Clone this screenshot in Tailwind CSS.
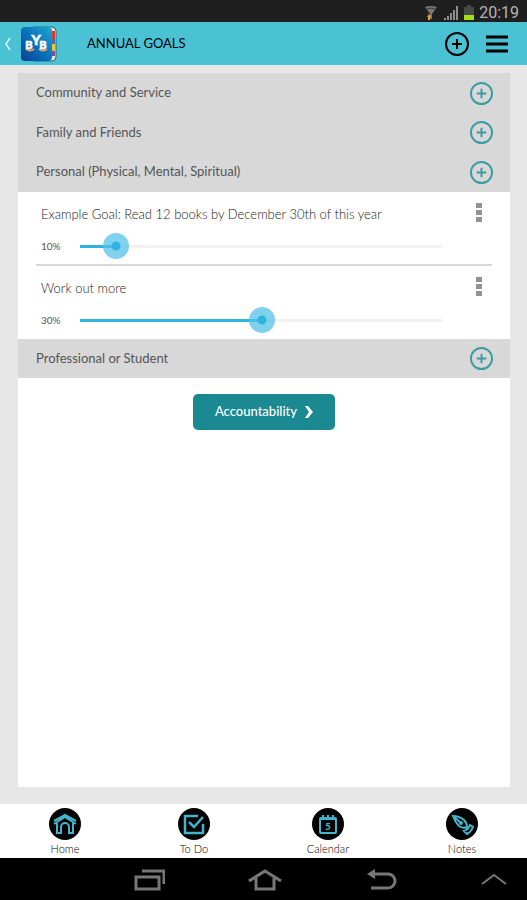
<!DOCTYPE html>
<html lang="en">

<head>
  <meta charset="UTF-8" />
  <meta name="viewport" content="width=device-width, initial-scale=1.0" />
  <title>Annual Goals</title>
  <script src="https://cdn.jsdelivr.net/npm/@tailwindcss/browser@4"></script>

  <style>
    body {
      font-family: Lato, 'Open Sans', sans-serif;
    }

    /* Goal progress slider */
    .progress {
      appearance: none;
      height: 26px;
      background: linear-gradient(to right, #2db5df var(--value), #f2f2f2 var(--value)) center / calc(100% - 26px) 3px no-repeat;
    }

    .progress::-webkit-slider-thumb {
      appearance: none;
      width: 26px;
      height: 26px;
      border-radius: 50%;
      background: radial-gradient(circle, #2db5df 4px, rgb(86 194 232 / 0.75) 5px);
    }
  </style>
</head>

<body class="min-h-screen flex flex-col bg-[#e7e7e7] text-[#555]">

  <!-- Status bar -->
  <div class="h-[22px] bg-[#1f1f1f] flex items-center justify-end gap-1 pt-1 pr-2 text-[#b5b5b5]">
    <svg class="w-4 h-4" viewBox="0 0 16 16" fill="none">
      <path d="M2 2Q8 0 14 2L9 9V14H7V9Z" fill="#777" />
      <path d="M4 4Q8 2 12 4" stroke="#333" />
      <path d="M6 9L8 12H7V15H5V12H4Z" fill="#f0a030" />
    </svg>
    <svg class="w-4 h-4" viewBox="0 0 16 16" fill="#8d8d8d">
      <path d="M1 13h2v2H1zM4 11h2v4H4zM7 8h2v7H7zM10 5h2v10h-2zM13 1h2v14h-2z" />
    </svg>
    <svg class="w-3 h-4" viewBox="0 0 12 16">
      <path d="M4 0h4v2h3v8H1V2h3z" fill="#484848" />
      <path d="M1 10h10v5H1z" fill="#a4dc1c" />
    </svg>
    <span class="text-base leading-5 font-[Roboto]">20:19</span>
  </div>

  <!-- Header -->
  <header class="h-[43px] bg-[#4bc1d4] flex items-center pl-1 pr-[18px] text-black">
    <a href="#" aria-label="Back" class="flex items-center gap-2">
      <svg class="w-2 h-4" viewBox="0 0 8 16" fill="none" stroke="#d9f3f7" stroke-width="1.5">
        <path d="M6 2L2 8l4 6" />
      </svg>
      <svg class="w-[38px] h-[38px]" viewBox="0 0 38 38">
        <defs>
          <linearGradient id="cover" x1="0" y1="1" x2="1" y2="0">
            <stop offset="0" stop-color="#0b3f94" />
            <stop offset="0.5" stop-color="#0873bd" />
            <stop offset="1" stop-color="#20a6d0" />
          </linearGradient>
        </defs>
        <rect x="10" y="2" width="26" height="34" rx="4" fill="#e9e2cf" stroke="#286b78" />
        <path d="M31 6h4v8h-4z" fill="#d93a2b" />
        <path d="M31 14h4v5h-4z" fill="#3f6fb5" />
        <path d="M31 19h4v7h-4z" fill="#efc52c" />
        <path d="M31 26h4v5h-4z" fill="#7a4fa3" />
        <rect x="1" y="2" width="31" height="34" rx="4" fill="url(#cover)" />
        <path d="M6 24q4 3 8 0M19 24q4 3 8 0" stroke="#e0a458" stroke-width="2" fill="none" />
        <g font-family="Lato" font-weight="900" fill="#fff" stroke="#fff" stroke-width="0.6" text-anchor="middle">
          <text x="9" y="24" font-size="11">B</text>
          <text x="16" y="20" font-size="14">Y</text>
          <text x="23" y="24" font-size="11">B</text>
        </g>
      </svg>
    </a>
    <h1 class="ml-7 pl-px flex-1 text-[13px]">ANNUAL GOALS</h1>
    <button aria-label="Add goal">
      <svg class="w-6 h-6" viewBox="0 0 24 24" fill="none" stroke="currentColor" stroke-width="2">
        <circle cx="12" cy="12" r="11" />
        <path d="M12 7v10M7 12h10" />
      </svg>
    </button>
    <button aria-label="Menu" class="ml-4">
      <svg class="w-6 h-6" viewBox="0 0 24 24" stroke="currentColor" stroke-width="3">
        <path d="M1 5h22M1 12h22M1 19h22" />
      </svg>
    </button>
  </header>

  <!-- Goals -->
  <main class="flex-1 ml-[18px] mt-2 mb-[17px] mr-[17px] bg-white text-[13px]">
    <section class="h-10 bg-[#d8d8d8] flex items-center justify-between pl-[18px] pr-[17px]">
      <h2>Community and Service</h2>
      <button aria-label="Add to Community and Service" class="text-[#3a9ca3]">
        <svg class="w-[23px] h-[23px]" viewBox="0 0 24 24" fill="none" stroke="currentColor" stroke-width="2">
          <circle cx="12" cy="12" r="11" />
          <path d="M12 7v10M7 12h10" />
        </svg>
      </button>
    </section>
    <section class="h-[39px] bg-[#d8d8d8] flex items-center justify-between pl-[18px] pr-[17px]">
      <h2>Family and Friends</h2>
      <button aria-label="Add to Family and Friends" class="text-[#3a9ca3]">
        <svg class="w-[23px] h-[23px]" viewBox="0 0 24 24" fill="none" stroke="currentColor" stroke-width="2">
          <circle cx="12" cy="12" r="11" />
          <path d="M12 7v10M7 12h10" />
        </svg>
      </button>
    </section>
    <section>
      <div class="h-10 bg-[#d8d8d8] flex items-center justify-between pl-[18px] pr-[17px]">
        <h2>Personal (Physical, Mental, Spiritual)</h2>
        <button aria-label="Add to Personal" class="text-[#3a9ca3]">
          <svg class="w-[23px] h-[23px]" viewBox="0 0 24 24" fill="none" stroke="currentColor" stroke-width="2">
            <circle cx="12" cy="12" r="11" />
            <path d="M12 7v10M7 12h10" />
          </svg>
        </button>
      </div>
      <ul class="px-[18px]">
        <li class="h-[74px] pt-2 pl-1 border-b-2 border-[#d8d8d8]">
          <div class="flex items-start justify-between pr-[9px]">
            <label for="goal-books" class="leading-7 pl-px font-light text-[#222]">Example Goal: Read 12 books by December 30th of this year</label>
            <button aria-label="Goal options">
              <svg class="w-2 h-6" viewBox="0 0 8 24" fill="#929292">
                <path d="M1 3h6v5H1zM1 10h6v5H1zM1 17h6v5H1z" />
              </svg>
            </button>
          </div>
          <div class="mt-[5px] flex items-center">
            <span class="w-[27px] pl-px text-[10px]">10%</span>
            <input id="goal-books" type="range" value="10" class="progress flex-1 mr-9" style="--value: 10%" />
          </div>
        </li>
        <li class="h-[73px] pt-2 pl-1">
          <div class="flex items-start justify-between pr-[9px]">
            <label for="goal-workout" class="leading-7 pl-px font-light text-[#222]">Work out more</label>
            <button aria-label="Goal options">
              <svg class="w-2 h-6" viewBox="0 0 8 24" fill="#929292">
                <path d="M1 3h6v5H1zM1 10h6v5H1zM1 17h6v5H1z" />
              </svg>
            </button>
          </div>
          <div class="mt-[5px] flex items-center">
            <span class="w-[27px] pl-px text-[10px]">30%</span>
            <input id="goal-workout" type="range" value="50" class="progress flex-1 mr-9" style="--value: 50%" />
          </div>
        </li>
      </ul>
    </section>
    <section class="h-[39px] bg-[#d8d8d8] flex items-center justify-between pl-[18px] pr-[17px]">
      <h2>Professional or Student</h2>
      <button aria-label="Add to Professional or Student" class="text-[#3a9ca3]">
        <svg class="w-[23px] h-[23px]" viewBox="0 0 24 24" fill="none" stroke="currentColor" stroke-width="2">
          <circle cx="12" cy="12" r="11" />
          <path d="M12 7v10M7 12h10" />
        </svg>
      </button>
    </section>

    <button class="mt-4 mx-auto h-9 w-[142px] rounded-[5px] bg-[#1b8991] text-white font-medium flex items-center justify-center gap-2">
      Accountability
      <svg class="w-2 h-3" viewBox="0 0 8 12" fill="#fff">
        <path d="M0 0h3l5 6-5 6H0l4-6z" />
      </svg>
    </button>
  </main>

  <!-- Tabs -->
  <nav class="h-[54px] bg-white flex justify-between px-[49px] pt-1 text-[11px] leading-[18px] font-light text-black">
    <a href="#" class="flex flex-col items-center">
      <svg class="w-8 h-8" viewBox="0 0 32 32" fill="none" stroke="#43b4cb" stroke-width="2">
        <circle cx="16" cy="16" r="16" fill="#000" stroke="none" />
        <path d="M5 16L16 9l11 7M5 13l11-6 11 6" />
        <path d="M8 15v10h4v-6a4 4 0 018 0v6h4V15" />
      </svg>
      Home
    </a>
    <a href="#" class="flex flex-col items-center">
      <svg class="w-8 h-8" viewBox="0 0 32 32" fill="none" stroke="#43b4cb" stroke-width="2.5">
        <circle cx="16" cy="16" r="16" fill="#000" stroke="none" />
        <path d="M20 8H7v17h18v-9M11 14l5 5 9-10" />
      </svg>
      To Do
    </a>
    <a href="#" class="flex flex-col items-center">
      <svg class="w-8 h-8" viewBox="0 0 32 32" fill="none" stroke="#43b4cb" stroke-width="2">
        <circle cx="16" cy="16" r="16" fill="#000" stroke="none" />
        <rect x="8" y="10" width="16" height="15" rx="1" />
        <path d="M8 11h16M11 7v4M16 7v4M21 7v4" />
        <text x="16" y="22" font-family="Lato" font-size="10" font-weight="900" fill="#43b4cb" stroke="none" text-anchor="middle">5</text>
      </svg>
      Calendar
    </a>
    <a href="#" class="flex flex-col items-center">
      <svg class="w-8 h-8" viewBox="0 0 32 32" fill="none" stroke="#43b4cb" stroke-width="2">
        <circle cx="16" cy="16" r="16" fill="#000" stroke="none" />
        <path d="M7 8q6 0 11 4 3 3 3 7-4 2-8-1-4-4-6-10zM7 8l8 7M18 23q4-1 6-6l3 2q-2 5-6 7z" />
        <circle cx="15" cy="15" r="1" />
      </svg>
      Notes
    </a>
  </nav>

  <!-- System navigation -->
  <nav class="h-[42px] bg-black flex items-center justify-between pl-[133px] pr-[19px] text-[#777]">
    <button aria-label="Recent apps">
      <svg class="w-8 h-6" viewBox="0 0 32 24" fill="none" stroke="currentColor" stroke-width="3">
        <path d="M3 10h23v12H3zM9 4h22v13" />
      </svg>
    </button>
    <button aria-label="Home screen">
      <svg class="w-9 h-6" viewBox="0 0 36 24" fill="none" stroke="currentColor" stroke-width="3">
        <path d="M2 14L18 4l16 10M9 11v11h18V11" />
      </svg>
    </button>
    <button aria-label="Back">
      <svg class="w-8 h-6" viewBox="0 0 32 24" fill="none" stroke="currentColor" stroke-width="3">
        <path d="M8 7h14a7 7 0 010 14H5" />
        <path d="M1 7l8-5v10z" fill="currentColor" stroke="none" />
      </svg>
    </button>
    <button aria-label="Expand">
      <svg class="w-7 h-6" viewBox="0 0 28 24" fill="none" stroke="currentColor" stroke-width="2">
        <path d="M2 17L14 8l12 9" />
      </svg>
    </button>
  </nav>

</body>

</html>
